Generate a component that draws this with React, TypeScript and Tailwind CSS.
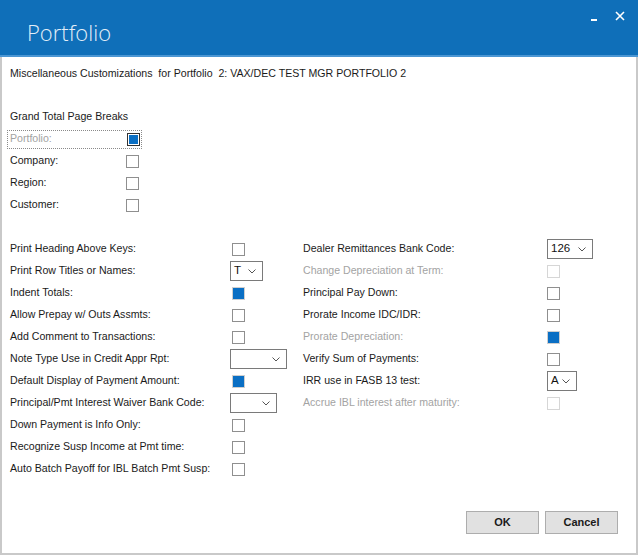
import React from "react";

const FONT = { fontFamily: '"Liberation Sans", Arial, sans-serif' };

function Check({ checked = false, disabled = false, focus = false }: { checked?: boolean; disabled?: boolean; focus?: boolean }) {
  const border = disabled ? "border-[#d6d6d6]" : focus ? "border-[#333333]" : checked ? "border-[#cfcfcf]" : "border-[#8f8f8f]";
  return (
    <div className={`w-[13px] h-[13px] border ${border} bg-white flex items-center justify-center`}>
      {checked && <div className={focus ? "w-[9px] h-[9px] bg-[#0a6fc4]" : "w-[11px] h-[11px] bg-[#0a6fc4]"} />}
    </div>
  );
}

function Combo({ w, value = "" }: { w: string; value?: string }) {
  return (
    <div className={`${w} h-[20px] border border-[#7a7a7a] bg-white flex items-center justify-between pl-[3px] pr-[6px] text-[11.5px] text-[#111]`}>
      <span>{value}</span>
      <svg width="8" height="5" viewBox="0 0 8 5" className="shrink-0">
        <path d="M0.5 0.5 L4 4 L7.5 0.5" fill="none" stroke="#555" strokeWidth="1" />
      </svg>
    </div>
  );
}

type Ctrl = React.ReactNode;

function LRow({ label, ctrl, grey = false }: { label: string; ctrl: Ctrl; grey?: boolean }) {
  return (
    <div className="h-[22px] flex items-center">
      <div className={`w-[220px] pl-[8px] whitespace-nowrap text-[10.6px] ${grey ? "text-[#a3a3a3]" : "text-[#1a1a1a]"}`}>{label}</div>
      {ctrl}
    </div>
  );
}

function RRow({ label, ctrl, grey = false }: { label: string; ctrl: Ctrl; grey?: boolean }) {
  return (
    <div className="h-[22px] flex items-center">
      <div className={`w-[244px] whitespace-nowrap text-[10.6px] ${grey ? "text-[#a3a3a3]" : "text-[#1a1a1a]"}`}>{label}</div>
      {ctrl}
    </div>
  );
}

export default function App() {
  return (
    <div className="w-[638px] h-[555px] bg-white flex flex-col" style={FONT}>
      {/* Title bar */}
      <div className="h-[57px] bg-[#0f6fb9] border-b-2 border-[#4b96d3] flex items-start justify-between shrink-0">
        <div
          className="pl-[27px] pt-[18px] text-[22px] leading-[28px] font-light text-[#e3eef8]"
          style={{ fontFamily: '"Open Sans", "Noto Sans", sans-serif' }}
        >
          Portfolio
        </div>
        <div className="flex items-start pt-[11px] pr-[13px] gap-[17px]">
          <svg width="8" height="10" viewBox="0 0 8 10" className="mt-[1px]">
            <rect x="1" y="7" width="6" height="2" fill="#ffffff" />
          </svg>
          <svg width="10" height="10" viewBox="0 0 10 10">
            <path d="M1 1 L9 9 M9 1 L1 9" stroke="#ffffff" strokeWidth="1.6" />
          </svg>
        </div>
      </div>

      {/* Body */}
      <div className="flex-1 flex flex-col border-l-2 border-r-2 border-b-2 border-[#c9c9c9]">
        <div className="pl-[8px] pt-[8px] h-[24px] whitespace-nowrap text-[10.6px] leading-[16px] text-[#1a1a1a]">
          Miscellaneous Customizations&nbsp; for Portfolio&nbsp; 2: VAX/DEC TEST MGR PORTFOLIO 2
        </div>

        <div className="mt-[25px] flex flex-col">
          <div className="h-[22px] flex items-center pl-[8px] text-[10.6px] text-[#1a1a1a]">Grand Total Page Breaks</div>
          <div className="h-[22px] flex items-center pl-[5px]">
            <div className="w-[135px] h-[19px] border border-dotted border-[#8a8a8a] flex items-center justify-between pl-[2px] pr-[1px]">
              <span className="text-[10.6px] text-[#a3a3a3]">Portfolio:</span>
              <Check checked focus />
            </div>
          </div>
          {["Company:", "Region:", "Customer:"].map((l) => (
            <div key={l} className="h-[22px] flex items-center">
              <div className="w-[124px] pl-[8px] text-[10.6px] text-[#1a1a1a]">{l}</div>
              <Check />
            </div>
          ))}
        </div>

        <div className="mt-[22px] flex">
          <div className="w-[301px] flex flex-col">
            <LRow label="Print Heading Above Keys:" ctrl={<div className="ml-[10px]"><Check /></div>} />
            <LRow label="Print Row Titles or Names:" ctrl={<div className="ml-[8px]"><Combo w="w-[33px]" value="T" /></div>} />
            <LRow label="Indent Totals:" ctrl={<div className="ml-[10px]"><Check checked /></div>} />
            <LRow label="Allow Prepay w/ Outs Assmts:" ctrl={<div className="ml-[10px]"><Check /></div>} />
            <LRow label="Add Comment to Transactions:" ctrl={<div className="ml-[10px]"><Check /></div>} />
            <LRow label="Note Type Use in Credit Appr Rpt:" ctrl={<div className="ml-[8px]"><Combo w="w-[57px]" /></div>} />
            <LRow label="Default Display of Payment Amount:" ctrl={<div className="ml-[10px]"><Check checked /></div>} />
            <LRow label="Principal/Pmt Interest Waiver Bank Code:" ctrl={<div className="ml-[8px]"><Combo w="w-[47px]" /></div>} />
            <LRow label="Down Payment is Info Only:" ctrl={<div className="ml-[10px]"><Check /></div>} />
            <LRow label="Recognize Susp Income at Pmt time:" ctrl={<div className="ml-[10px]"><Check /></div>} />
            <LRow label="Auto Batch Payoff for IBL Batch Pmt Susp:" ctrl={<div className="ml-[10px]"><Check /></div>} />
          </div>
          <div className="flex flex-col">
            <RRow label="Dealer Remittances Bank Code:" ctrl={<Combo w="w-[46px]" value="126" />} />
            <RRow label="Change Depreciation at Term:" grey ctrl={<Check disabled />} />
            <RRow label="Principal Pay Down:" ctrl={<Check />} />
            <RRow label="Prorate Income IDC/IDR:" ctrl={<Check />} />
            <RRow label="Prorate Depreciation:" grey ctrl={<Check checked />} />
            <RRow label="Verify Sum of Payments:" ctrl={<Check />} />
            <RRow label="IRR use in FASB 13 test:" ctrl={<Combo w="w-[30px]" value="A" />} />
            <RRow label="Accrue IBL interest after maturity:" grey ctrl={<Check disabled />} />
          </div>
        </div>

        <div className="mt-auto flex justify-end gap-[6px] pr-[18px] pb-[19px]">
          <button className="w-[73px] h-[23px] bg-[#e1e1e1] border border-[#adadad] text-[11px] font-bold text-[#1a1a1a]">OK</button>
          <button className="w-[73px] h-[23px] bg-[#e1e1e1] border border-[#adadad] text-[11px] font-bold text-[#1a1a1a]">Cancel</button>
        </div>
      </div>
    </div>
  );
}
